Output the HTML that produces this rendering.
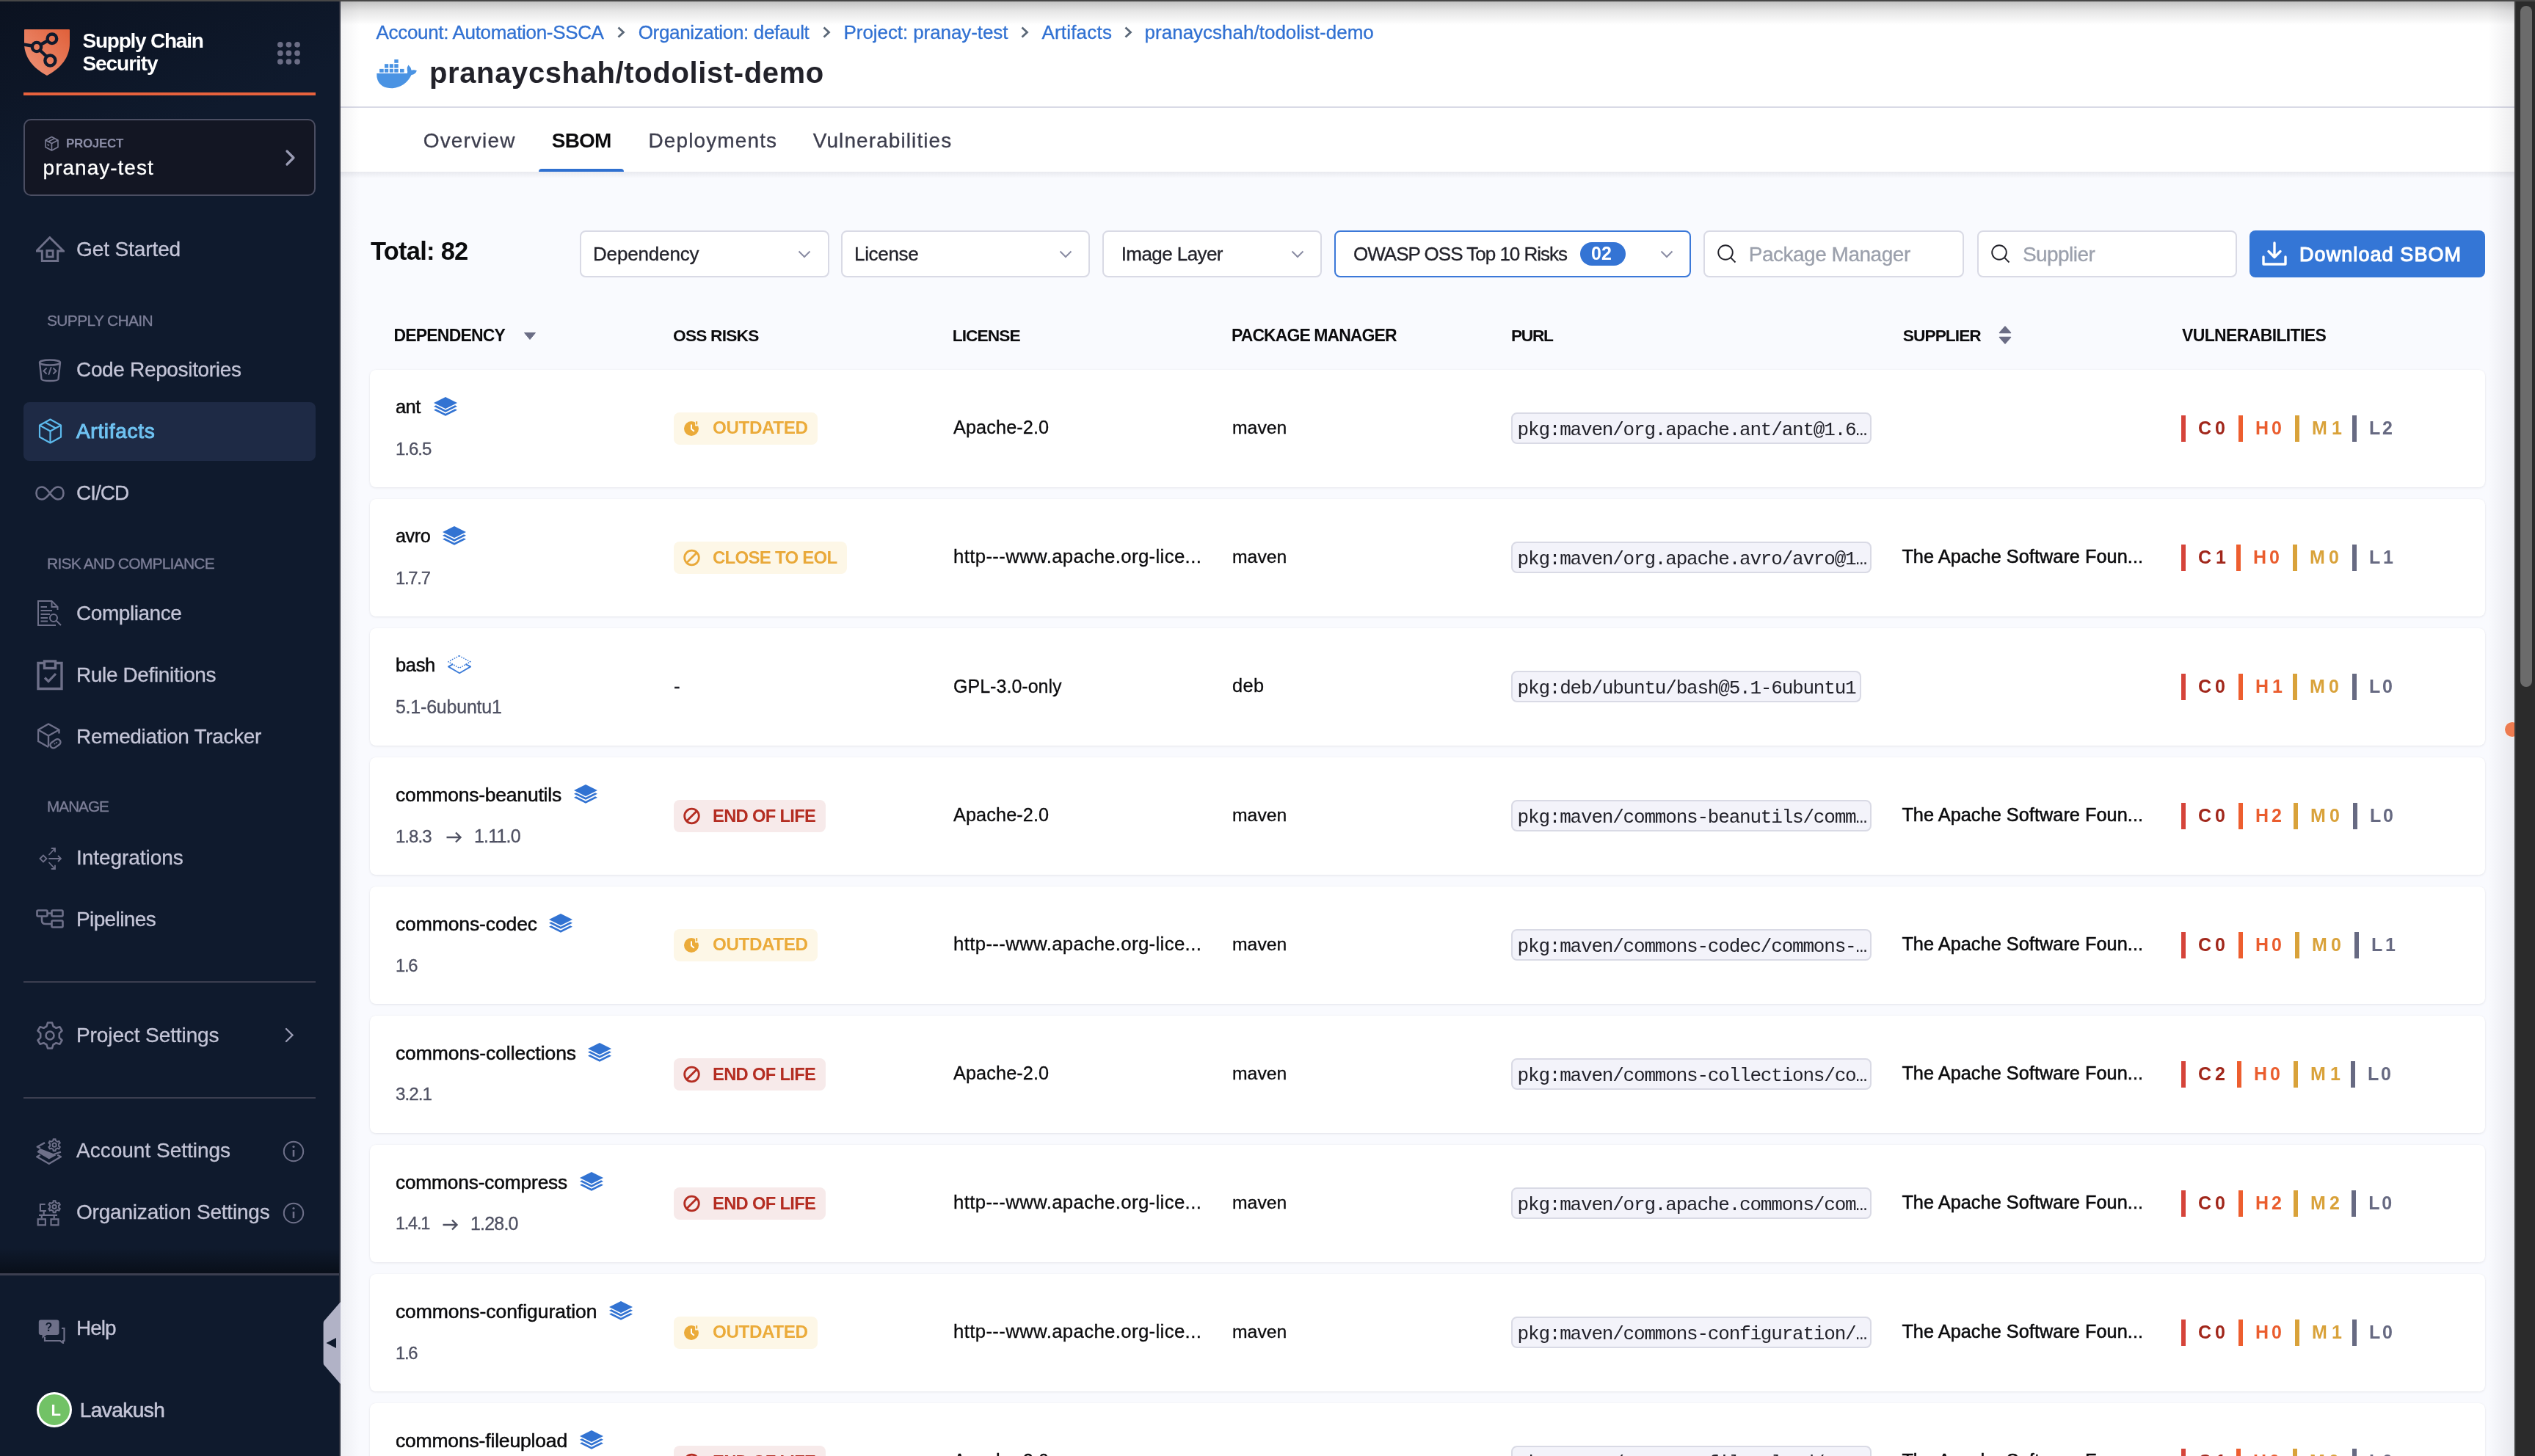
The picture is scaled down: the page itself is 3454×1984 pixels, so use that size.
<!DOCTYPE html><html><head><meta charset="utf-8"><title>SBOM</title><style>
*{box-sizing:border-box;margin:0;padding:0}
html,body{width:3454px;height:1984px;overflow:hidden;background:#f9fafe;font-family:"Liberation Sans",sans-serif}
.t{position:absolute;white-space:nowrap;-webkit-font-smoothing:antialiased}
body{will-change:transform}
@media (max-width:1800px){html{zoom:0.5}}
</style></head><body>
<div style="position:absolute;left:0px;top:0px;width:462px;height:1984px;background:linear-gradient(160deg,#0b1220 0%,#0f1a2d 12%,#0f1a2d 100%)"></div>
<div style="position:absolute;left:462px;top:0px;width:2px;height:1984px;background:#2c303e"></div>
<svg style="position:absolute;left:33px;top:40px;" width="62" height="63" viewBox="0 0 62 63" fill="none"><defs><linearGradient id="lg" x1="0" y1="1" x2="1" y2="0"><stop offset="0" stop-color="#ee9479"/><stop offset="1" stop-color="#e0603a"/></linearGradient></defs>
<path d="M1 0 H61 Q62 0 62 1 V19 C62 38 50 53 31 63 C12 53 0 38 0 19 V1 Q0 0 1 0Z" fill="url(#lg)"/>
<g stroke="#0f1a2d" stroke-width="4.4" fill="none"><path d="M-2 20.5 L11 22.5"/><path d="M22 21 L32 15.5"/><path d="M21.5 28.5 L30 36.5"/>
<circle cx="37.9" cy="12.8" r="6.3"/><circle cx="17" cy="24" r="6.1"/><circle cx="35.4" cy="42.5" r="7"/></g></svg>
<div class="t" style="left:112.50px;top:41.50px;font-size:28px;line-height:28px;color:#ffffff;font-weight:700;letter-spacing:-1.23px;">Supply Chain</div>
<div class="t" style="left:112.50px;top:72.50px;font-size:28px;line-height:28px;color:#ffffff;font-weight:700;letter-spacing:-1.07px;">Security</div>
<svg style="position:absolute;left:378px;top:57px;" width="31" height="31" viewBox="0 0 31 31" fill="none"><circle cx="3.85" cy="3.85" r="3.85" fill="#6b6d85"/><circle cx="15.45" cy="3.85" r="3.85" fill="#6b6d85"/><circle cx="27.05" cy="3.85" r="3.85" fill="#6b6d85"/><circle cx="3.85" cy="15.45" r="3.85" fill="#6b6d85"/><circle cx="15.45" cy="15.45" r="3.85" fill="#6b6d85"/><circle cx="27.05" cy="15.45" r="3.85" fill="#6b6d85"/><circle cx="3.85" cy="27.05" r="3.85" fill="#6b6d85"/><circle cx="15.45" cy="27.05" r="3.85" fill="#6b6d85"/><circle cx="27.05" cy="27.05" r="3.85" fill="#6b6d85"/></svg>
<div style="position:absolute;left:32px;top:126px;width:398px;height:4px;background:#e8623d"></div>
<div style="position:absolute;left:32px;top:162px;width:398px;height:105px;background:#131623;border:2px solid #4b4e62;border-radius:10px"></div>
<svg style="position:absolute;left:60px;top:185px;" width="21" height="21" viewBox="0 0 21 21" fill="none"><g stroke="#7b7d95" stroke-width="1.6" stroke-linejoin="round"><path d="M10.5 1.5 L19 6 V15.5 L10.5 20 L2 15.5 V6 Z"/><path d="M2 6 L10.5 10.5 L19 6 M10.5 10.5 V20"/><path d="M6 8 L14.5 3.5"/><path d="M4.5 12 L7 13.2"/></g></svg>
<div class="t" style="left:90.00px;top:187.00px;font-size:17px;line-height:17px;color:#8b8da6;font-weight:700;letter-spacing:-0.33px;">PROJECT</div>
<div class="t" style="left:58.60px;top:215.00px;font-size:28px;line-height:28px;color:#ffffff;letter-spacing:1.00px;-webkit-text-stroke:0.3px #ffffff;">pranay-test</div>
<svg style="position:absolute;left:386px;top:203px;" width="20" height="24" viewBox="0 0 20 24" fill="none"><path d="M5 3 L14 12 L5 21" stroke="#9a9cb4" stroke-width="3.2" fill="none" stroke-linecap="round" stroke-linejoin="round"/></svg>
<div class="t" style="left:104.00px;top:326.00px;font-size:28px;line-height:28px;color:#c4c5d7;letter-spacing:-0.10px;-webkit-text-stroke:0.3px #c4c5d7;">Get Started</div>
<svg style="position:absolute;left:49px;top:322px;" width="39" height="36" viewBox="0 0 39 36" fill="none"><path d="M0.7 20 L18.8 1.6 L37.4 20 H29.7 V33.5 H8.3 V20 Z" stroke="#6e7089" stroke-width="2.9" stroke-linejoin="miter" fill="none"/><rect x="14.9" y="19.5" width="8.2" height="8.5" stroke="#6e7089" stroke-width="2.9"/></svg>
<div class="t" style="left:64.00px;top:425.50px;font-size:21.0px;line-height:21.0px;color:#7d7f98;letter-spacing:-0.68px;-webkit-text-stroke:0.3px #7d7f98;">SUPPLY CHAIN</div>
<div class="t" style="left:104.00px;top:489.50px;font-size:28px;line-height:28px;color:#c4c5d7;letter-spacing:-0.34px;-webkit-text-stroke:0.3px #c4c5d7;">Code Repositories</div>
<svg style="position:absolute;left:52px;top:489px;" width="32" height="32" viewBox="0 0 32 32" fill="none"><ellipse cx="16" cy="5" rx="14" ry="3.5" stroke="#6e7089" stroke-width="2.4"/><path d="M2 5 L4.5 27.5 Q5 30 16 30 Q27 30 27.5 27.5 L30 5" stroke="#6e7089" stroke-width="2.4" fill="none"/><path d="M11 13 L7.5 16.5 L11 20 M21 13 L24.5 16.5 L21 20 M17.5 12 L14.5 21" stroke="#6e7089" stroke-width="2" fill="none" stroke-linecap="round"/></svg>
<div style="position:absolute;left:32px;top:548px;width:398px;height:80px;background:#1e2a45;border-radius:8px"></div>
<div class="t" style="left:104.00px;top:573.50px;font-size:28px;line-height:28px;color:#6fc3f2;letter-spacing:0.69px;-webkit-text-stroke:1.0px #6fc3f2;">Artifacts</div>
<svg style="position:absolute;left:52px;top:570px;" width="33" height="35" viewBox="0 0 33 35" fill="none"><g stroke="#5cb9ec" stroke-width="2.2" stroke-linejoin="round" fill="none"><path d="M16.5 1.5 L31 9.5 V25.5 L16.5 33.5 L2 25.5 V9.5 Z"/><path d="M2 9.5 L16.5 17.5 L31 9.5 M16.5 17.5 V33.5"/><path d="M9.5 5.5 L24 13.5"/></g></svg>
<div class="t" style="left:104.00px;top:657.50px;font-size:28px;line-height:28px;color:#c4c5d7;letter-spacing:-1.00px;-webkit-text-stroke:0.3px #c4c5d7;">CI/CD</div>
<svg style="position:absolute;left:48px;top:662px;" width="40" height="20" viewBox="0 0 40 20" fill="none"><path d="M20 10 C15 3 12 1.5 9 1.5 C4.5 1.5 1.5 5 1.5 10 C1.5 15 4.5 18.5 9 18.5 C12 18.5 15 17 20 10 C25 3 28 1.5 31 1.5 C35.5 1.5 38.5 5 38.5 10 C38.5 15 35.5 18.5 31 18.5 C28 18.5 25 17 20 10Z" stroke="#6e7089" stroke-width="2.6" fill="none"/></svg>
<div class="t" style="left:64.00px;top:757.00px;font-size:21.0px;line-height:21.0px;color:#7d7f98;letter-spacing:-0.78px;-webkit-text-stroke:0.3px #7d7f98;">RISK AND COMPLIANCE</div>
<div class="t" style="left:104.00px;top:821.50px;font-size:28px;line-height:28px;color:#c4c5d7;letter-spacing:-0.44px;-webkit-text-stroke:0.3px #c4c5d7;">Compliance</div>
<svg style="position:absolute;left:51px;top:818px;" width="34" height="36" viewBox="0 0 34 36" fill="none"><g stroke="#6e7089" stroke-width="2" fill="none"><path d="M27.5 13 V9 L19.5 1 H1 V34 H25"/><path d="M19.5 1 V9 H27.5"/><path d="M4.5 9 H13 M4.5 14 H20 M4.5 19 H17 M4.5 24 H14 M4.5 28.5 H14"/><circle cx="22" cy="24" r="5"/><path d="M25.5 27.5 L32 34"/></g></svg>
<div class="t" style="left:104.00px;top:905.50px;font-size:28px;line-height:28px;color:#c4c5d7;letter-spacing:-0.37px;-webkit-text-stroke:0.3px #c4c5d7;">Rule Definitions</div>
<svg style="position:absolute;left:50px;top:899px;" width="36" height="42" viewBox="0 0 36 42" fill="none"><g stroke="#6e7089" stroke-width="3.4" fill="none"><path d="M9 4.5 H2 V39.5 H34 V4.5 H27"/><rect x="10.5" y="2" width="15" height="9.5"/><path d="M11 24.5 L16 29.5 L26 19" stroke-width="3.2"/></g></svg>
<div class="t" style="left:104.00px;top:989.50px;font-size:28px;line-height:28px;color:#c4c5d7;letter-spacing:-0.33px;-webkit-text-stroke:0.3px #c4c5d7;">Remediation Tracker</div>
<svg style="position:absolute;left:51px;top:985px;" width="34" height="38" viewBox="0 0 34 38" fill="none"><g stroke="#6e7089" stroke-width="2.4" fill="none" stroke-linejoin="round"><path d="M29.5 14.5 V9.5 L15 1.5 L1 9.5 V25 L15 33"/><path d="M1 9.5 L15 17.5 L29.5 9.5 M15 17.5 V32"/><rect x="17" y="24" width="15" height="8.5" rx="4.2" transform="rotate(-35 24.5 28.25)"/></g><circle cx="23.5" cy="28.5" r="1" fill="#6e7089"/><circle cx="26" cy="27" r="1" fill="#6e7089"/></svg>
<div class="t" style="left:64.00px;top:1089.12px;font-size:20.75px;line-height:20.75px;color:#7d7f98;letter-spacing:-1.00px;-webkit-text-stroke:0.3px #7d7f98;">MANAGE</div>
<div class="t" style="left:104.00px;top:1154.50px;font-size:28px;line-height:28px;color:#c4c5d7;letter-spacing:-0.05px;-webkit-text-stroke:0.3px #c4c5d7;">Integrations</div>
<svg style="position:absolute;left:53px;top:1154px;" width="32" height="32" viewBox="0 0 32 32" fill="none"><g stroke="#6e7089" stroke-width="1.8" fill="none" stroke-linecap="round"><path d="M1.5 16 L6 11.5 L10.5 16 L6 20.5 Z"/><path d="M14 16 H30 M26.5 12.5 L30 16 L26.5 19.5"/><path d="M14 10.5 L22 2 M17.5 2 H22 V6.5"/><path d="M14 21.5 L22 30 M22 25.5 V30 H17.5"/></g></svg>
<div class="t" style="left:104.00px;top:1238.50px;font-size:28px;line-height:28px;color:#c4c5d7;letter-spacing:-0.62px;-webkit-text-stroke:0.3px #c4c5d7;">Pipelines</div>
<svg style="position:absolute;left:49px;top:1239px;" width="38" height="26" viewBox="0 0 38 26" fill="none"><g stroke="#6e7089" stroke-width="2.6" fill="none"><rect x="1.5" y="1.5" width="14" height="8" rx="1.5"/><rect x="21.5" y="1.5" width="15" height="8" rx="1.5"/><rect x="21.5" y="15.5" width="15" height="9" rx="1.5"/><path d="M15.5 5.5 H21.5 M8 9.5 V15 Q8 20 13 20 H21.5"/></g></svg>
<div style="position:absolute;left:32px;top:1337px;width:398px;height:2px;background:#3b3e50"></div>
<div class="t" style="left:104.00px;top:1396.50px;font-size:28px;line-height:28px;color:#c4c5d7;letter-spacing:-0.10px;-webkit-text-stroke:0.3px #c4c5d7;">Project Settings</div>
<svg style="position:absolute;left:50px;top:1392px;" width="36" height="38" viewBox="0 0 36 38" fill="none"><path d="M15 1.5 H21 L22.5 6.5 L26.5 8.8 L31.5 7.3 L34.5 12.5 L30.8 16.2 V21.8 L34.5 25.5 L31.5 30.7 L26.5 29.2 L22.5 31.5 L21 36.5 H15 L13.5 31.5 L9.5 29.2 L4.5 30.7 L1.5 25.5 L5.2 21.8 V16.2 L1.5 12.5 L4.5 7.3 L9.5 8.8 L13.5 6.5 Z" stroke="#6e7089" stroke-width="2.6" stroke-linejoin="round" fill="none"/><circle cx="18" cy="19" r="5.5" stroke="#6e7089" stroke-width="2.6" fill="none"/></svg>
<svg style="position:absolute;left:386px;top:1399px;" width="16" height="24" viewBox="0 0 16 24" fill="none"><path d="M4 3 L12.5 11.5 L4 20" stroke="#9a9cb4" stroke-width="2.4" fill="none" stroke-linecap="round"/></svg>
<div style="position:absolute;left:32px;top:1495px;width:398px;height:2px;background:#3b3e50"></div>
<div class="t" style="left:104.00px;top:1553.50px;font-size:28px;line-height:28px;color:#c4c5d7;-webkit-text-stroke:0.3px #c4c5d7;">Account Settings</div>
<svg style="position:absolute;left:49px;top:1550px;" width="35" height="38" viewBox="0 0 35 38" fill="none"><path d="M23.55 4.20 L23.60 2.14 L26.60 2.14 L26.65 4.20 L29.52 5.85 L31.33 4.87 L32.83 7.47 L31.08 8.55 L31.08 11.85 L32.83 12.93 L31.33 15.53 L29.52 14.55 L26.65 16.20 L26.60 18.26 L23.60 18.26 L23.55 16.20 L20.68 14.55 L18.87 15.53 L17.37 12.93 L19.12 11.85 L19.12 8.55 L17.37 7.47 L18.87 4.87 L20.68 5.85 Z" stroke="#6e7089" stroke-width="2" stroke-linejoin="round" fill="none"/><circle cx="25.1" cy="10.2" r="2.6" stroke="#6e7089" stroke-width="2" fill="none"/><path d="M12 7.1 L1.7 12.7 L5.8 14.7" stroke="#6e7089" stroke-width="2.4" fill="none" stroke-linejoin="round"/><path d="M1.3 19.7 L5.8 14.9 L24.8 22.6 L27.3 24.2 L17.8 29.6 Z" fill="#6e7089"/><path d="M24 23.2 L33.9 19.7 M5.8 23.8 L1.3 26.3 L17.8 35.7 L33.9 26.3 L29.3 23.8" stroke="#6e7089" stroke-width="2.4" fill="none" stroke-linejoin="round"/></svg>
<svg style="position:absolute;left:385px;top:1554px;" width="30" height="30" viewBox="0 0 30 30" fill="none"><circle cx="15" cy="15" r="13.2" stroke="#6e7089" stroke-width="2" fill="none"/><path d="M15 13 V22" stroke="#6e7089" stroke-width="2.6"/><circle cx="15" cy="8.5" r="1.6" fill="#6e7089"/></svg>
<div class="t" style="left:104.00px;top:1637.50px;font-size:28px;line-height:28px;color:#c4c5d7;letter-spacing:-0.20px;-webkit-text-stroke:0.3px #c4c5d7;">Organization Settings</div>
<svg style="position:absolute;left:49px;top:1634px;" width="35" height="38" viewBox="0 0 35 38" fill="none"><path d="M23.55 4.30 L23.60 2.24 L26.60 2.24 L26.65 4.30 L29.52 5.95 L31.33 4.97 L32.83 7.57 L31.08 8.65 L31.08 11.95 L32.83 13.03 L31.33 15.63 L29.52 14.65 L26.65 16.30 L26.60 18.36 L23.60 18.36 L23.55 16.30 L20.68 14.65 L18.87 15.63 L17.37 13.03 L19.12 11.95 L19.12 8.65 L17.37 7.57 L18.87 4.97 L20.68 5.95 Z" stroke="#6e7089" stroke-width="2" stroke-linejoin="round" fill="none"/><circle cx="25.1" cy="10.3" r="2.6" stroke="#6e7089" stroke-width="2" fill="none"/><g stroke="#6e7089" stroke-width="2.2" fill="none"><path d="M12.6 7 H5.9 V16 H14 M10.7 16 V21.9 M4 21.9 H29 M7.8 21.9 V26.2 M24.7 21.9 V26.2"/><rect x="2.7" y="27.3" width="10.2" height="8"/><rect x="20.5" y="27.3" width="10" height="8"/></g></svg>
<svg style="position:absolute;left:385px;top:1638px;" width="30" height="30" viewBox="0 0 30 30" fill="none"><circle cx="15" cy="15" r="13.2" stroke="#6e7089" stroke-width="2" fill="none"/><path d="M15 13 V22" stroke="#6e7089" stroke-width="2.6"/><circle cx="15" cy="8.5" r="1.6" fill="#6e7089"/></svg>
<div style="position:absolute;left:0px;top:1700px;width:462px;height:36px;background:linear-gradient(180deg,rgba(0,0,0,0) 0%,rgba(0,0,0,0.45) 100%)"></div>
<div style="position:absolute;left:0px;top:1735px;width:462px;height:3px;background:#3c3f50"></div>
<div class="t" style="left:104.00px;top:1795.50px;font-size:28px;line-height:28px;color:#c4c5d7;letter-spacing:-1.00px;-webkit-text-stroke:0.3px #c4c5d7;">Help</div>
<svg style="position:absolute;left:51px;top:1797px;" width="38" height="34" viewBox="0 0 38 34" fill="none"><path d="M4.5 1.5 H26.5 Q29.5 1.5 29.5 4.5 V19 Q29.5 22 26.5 22 H12.5 L6.5 27 V22 H4.5 Q1.8 22 1.8 19 V4.5 Q1.8 1.5 4.5 1.5Z" fill="#6e7089"/><path d="M33 13 H36.5 V30 H35 V33 L31 30 H10 V25" stroke="#6e7089" stroke-width="2.2" fill="none"/><text x="15.3" y="17" font-family="Liberation Sans" font-weight="700" font-size="16" fill="#0f1a2d" text-anchor="middle">?</text></svg>
<svg style="position:absolute;left:438px;top:1774px;" width="26" height="112" viewBox="0 0 26 112" fill="none"><path d="M26 0 L26 112 L3.5 86 Q2.6 85 2.6 82 V30 Q2.6 27 3.5 26 Z" fill="#b1b2c6"/><path d="M6.5 56 L20 49 V63Z" fill="#0f1a2d"/></svg>
<div style="position:absolute;left:50px;top:1897px;width:48px;height:48px;border-radius:50%;background:#72c266;border:3px solid #ffffff"></div>
<div class="t" style="left:69.50px;top:1910.50px;font-size:22px;line-height:22px;color:#ffffff;font-weight:700;">L</div>
<div class="t" style="left:108.80px;top:1907.50px;font-size:28px;line-height:28px;color:#c4c5d7;letter-spacing:-0.54px;-webkit-text-stroke:0.6px #c4c5d7;">Lavakush</div>
<div style="position:absolute;left:464px;top:0px;width:2962px;height:234px;background:#ffffff"></div>
<div style="position:absolute;left:464px;top:2px;width:2962px;height:32px;background:linear-gradient(180deg,rgba(0,0,0,0.24) 0%,rgba(0,0,0,0.1) 40%,rgba(0,0,0,0) 100%)"></div>
<div style="position:absolute;left:464px;top:145px;width:2962px;height:2px;background:#d9dae6"></div>
<div class="t" style="left:512.60px;top:31.00px;font-size:26px;line-height:26px;color:#3171d2;letter-spacing:-0.33px;-webkit-text-stroke:0.3px #3171d2;">Account: Automation-SSCA</div>
<svg style="position:absolute;left:839px;top:36px;" width="14" height="16" viewBox="0 0 14 16" fill="none"><path d="M3.5 1.5 L10.5 8 L3.5 14.5" stroke="#5b6878" stroke-width="2.8" fill="none"/></svg>
<div class="t" style="left:869.70px;top:31.00px;font-size:26px;line-height:26px;color:#3171d2;letter-spacing:-0.34px;-webkit-text-stroke:0.3px #3171d2;">Organization: default</div>
<svg style="position:absolute;left:1119px;top:36px;" width="14" height="16" viewBox="0 0 14 16" fill="none"><path d="M3.5 1.5 L10.5 8 L3.5 14.5" stroke="#5b6878" stroke-width="2.8" fill="none"/></svg>
<div class="t" style="left:1149.60px;top:31.00px;font-size:26px;line-height:26px;color:#3171d2;letter-spacing:-0.08px;-webkit-text-stroke:0.3px #3171d2;">Project: pranay-test</div>
<svg style="position:absolute;left:1389px;top:36px;" width="14" height="16" viewBox="0 0 14 16" fill="none"><path d="M3.5 1.5 L10.5 8 L3.5 14.5" stroke="#5b6878" stroke-width="2.8" fill="none"/></svg>
<div class="t" style="left:1419.40px;top:31.00px;font-size:26px;line-height:26px;color:#3171d2;letter-spacing:0.20px;-webkit-text-stroke:0.3px #3171d2;">Artifacts</div>
<svg style="position:absolute;left:1530px;top:36px;" width="14" height="16" viewBox="0 0 14 16" fill="none"><path d="M3.5 1.5 L10.5 8 L3.5 14.5" stroke="#5b6878" stroke-width="2.8" fill="none"/></svg>
<div class="t" style="left:1559.60px;top:31.00px;font-size:26px;line-height:26px;color:#3171d2;-webkit-text-stroke:0.3px #3171d2;">pranaycshah/todolist-demo</div>
<svg style="position:absolute;left:513px;top:80px;" width="56" height="41" viewBox="0 0 56 41" fill="none"><g fill="#4a93e3"><rect x="4.1" y="13.9" width="5.6" height="4.8"/><rect x="11" y="13.9" width="5.2" height="4.8"/><rect x="17.8" y="13.9" width="5.1" height="4.8"/><rect x="24.3" y="13.9" width="5.4" height="4.8"/><rect x="32" y="13.9" width="5.6" height="4.8"/><rect x="11" y="7.2" width="5.2" height="5.4"/><rect x="17.8" y="7.2" width="5.1" height="5.4"/><rect x="24.3" y="7.2" width="5.4" height="5.4"/><rect x="24.3" y="1" width="5.4" height="4.8"/><path d="M0.3 20.1 H41.8 Q42.6 18 41.8 15.5 Q41.2 11.5 43.4 8.5 Q47 11.5 47.6 15.8 Q51 14.6 54.9 16.2 Q53 21.5 47.6 22 Q40 38 22 40.2 Q6 40.5 1.5 29 Q0 25 0.3 20.1 Z"/></g></svg>
<div class="t" style="left:585.00px;top:79.00px;font-size:40px;line-height:40px;color:#22222a;font-weight:700;letter-spacing:0.62px;">pranaycshah/todolist-demo</div>
<div class="t" style="left:576.80px;top:177.80px;font-size:28px;line-height:28px;color:#3c3d4d;letter-spacing:1.13px;-webkit-text-stroke:0.3px #3c3d4d;">Overview</div>
<div class="t" style="left:751.80px;top:177.80px;font-size:28px;line-height:28px;color:#0b0b0d;font-weight:700;letter-spacing:-0.80px;">SBOM</div>
<div class="t" style="left:883.40px;top:177.80px;font-size:28px;line-height:28px;color:#3c3d4d;letter-spacing:1.13px;-webkit-text-stroke:0.3px #3c3d4d;">Deployments</div>
<div class="t" style="left:1107.70px;top:177.80px;font-size:28px;line-height:28px;color:#3c3d4d;letter-spacing:1.09px;-webkit-text-stroke:0.3px #3c3d4d;">Vulnerabilities</div>
<div style="position:absolute;left:734px;top:230px;width:116px;height:4px;background:#2f70d0;border-radius:4px 4px 0 0"></div>
<div style="position:absolute;left:464px;top:234px;width:2962px;height:9px;background:linear-gradient(180deg,rgba(40,41,61,0.08),rgba(40,41,61,0))"></div>
<div class="t" style="left:505.00px;top:324.75px;font-size:34.5px;line-height:34.5px;color:#0b0b0d;font-weight:700;letter-spacing:-0.75px;">Total: 82</div>
<div style="position:absolute;left:790px;top:314px;width:340px;height:64px;background:#fff;border:2px solid #d9dae5;border-radius:8px"></div>
<div class="t" style="left:808.00px;top:333.00px;font-size:26px;line-height:26px;color:#22222a;letter-spacing:-0.16px;-webkit-text-stroke:0.3px #22222a;">Dependency</div>
<svg style="position:absolute;left:1086px;top:336px;" width="20" height="20" viewBox="0 0 20 20" fill="none"><path d="M2.5 6.5 L10 14 L17.5 6.5" stroke="#8a8ca3" stroke-width="2" fill="none"/></svg>
<div style="position:absolute;left:1146px;top:314px;width:339px;height:64px;background:#fff;border:2px solid #d9dae5;border-radius:8px"></div>
<div class="t" style="left:1164.00px;top:333.00px;font-size:26px;line-height:26px;color:#22222a;letter-spacing:-0.33px;-webkit-text-stroke:0.3px #22222a;">License</div>
<svg style="position:absolute;left:1442px;top:336px;" width="20" height="20" viewBox="0 0 20 20" fill="none"><path d="M2.5 6.5 L10 14 L17.5 6.5" stroke="#8a8ca3" stroke-width="2" fill="none"/></svg>
<div style="position:absolute;left:1502px;top:314px;width:299px;height:64px;background:#fff;border:2px solid #d9dae5;border-radius:8px"></div>
<div class="t" style="left:1527.70px;top:333.00px;font-size:26px;line-height:26px;color:#22222a;letter-spacing:-0.57px;-webkit-text-stroke:0.3px #22222a;">Image Layer</div>
<svg style="position:absolute;left:1758px;top:336px;" width="20" height="20" viewBox="0 0 20 20" fill="none"><path d="M2.5 6.5 L10 14 L17.5 6.5" stroke="#8a8ca3" stroke-width="2" fill="none"/></svg>
<div style="position:absolute;left:1818px;top:314px;width:486px;height:64px;background:#fff;border:2px solid #3b78d8;border-radius:8px"></div>
<div class="t" style="left:1844.00px;top:333.00px;font-size:26px;line-height:26px;color:#22222a;letter-spacing:-1.00px;-webkit-text-stroke:0.3px #22222a;">OWASP OSS Top 10 Risks</div>
<div style="position:absolute;left:2153px;top:330px;width:62px;height:32px;background:#3474d4;border-radius:16px"></div>
<div class="t" style="left:2168.00px;top:332.50px;font-size:25px;line-height:25px;color:#ffffff;font-weight:700;">02</div>
<svg style="position:absolute;left:2261px;top:336px;" width="20" height="20" viewBox="0 0 20 20" fill="none"><path d="M2.5 6.5 L10 14 L17.5 6.5" stroke="#8a8ca3" stroke-width="2" fill="none"/></svg>
<div style="position:absolute;left:2321px;top:314px;width:355px;height:64px;background:#fff;border:2px solid #d9dae5;border-radius:8px"></div>
<svg style="position:absolute;left:2339px;top:332px;" width="28" height="28" viewBox="0 0 28 28" fill="none"><circle cx="12" cy="12" r="9.8" stroke="#22222a" stroke-width="1.9" fill="none"/><path d="M19.2 19.2 L25.5 25.5" stroke="#22222a" stroke-width="1.9"/></svg>
<div class="t" style="left:2382.70px;top:332.50px;font-size:28px;line-height:28px;color:#9ba0ac;letter-spacing:-0.48px;-webkit-text-stroke:0.3px #9ba0ac;">Package Manager</div>
<div style="position:absolute;left:2694px;top:314px;width:354px;height:64px;background:#fff;border:2px solid #d9dae5;border-radius:8px"></div>
<svg style="position:absolute;left:2712px;top:332px;" width="28" height="28" viewBox="0 0 28 28" fill="none"><circle cx="12" cy="12" r="9.8" stroke="#22222a" stroke-width="1.9" fill="none"/><path d="M19.2 19.2 L25.5 25.5" stroke="#22222a" stroke-width="1.9"/></svg>
<div class="t" style="left:2756.00px;top:332.50px;font-size:28px;line-height:28px;color:#9ba0ac;letter-spacing:-0.57px;-webkit-text-stroke:0.3px #9ba0ac;">Supplier</div>
<div style="position:absolute;left:3065px;top:314px;width:321px;height:64px;background:#3476d6;border-radius:8px"></div>
<svg style="position:absolute;left:3081px;top:328px;" width="36" height="36" viewBox="0 0 36 36" fill="none"><g stroke="#fff" stroke-width="3.4" fill="none" stroke-linecap="round" stroke-linejoin="round"><path d="M18 3 V22 M10 14.5 L18 22.5 L26 14.5"/><path d="M3 22 V32 H33 V22"/></g></svg>
<div class="t" style="left:3133.00px;top:333.50px;font-size:27px;line-height:27px;color:#ffffff;letter-spacing:1.08px;-webkit-text-stroke:1.1px #ffffff;">Download SBOM</div>
<div class="t" style="left:536.60px;top:445.50px;font-size:23.0px;line-height:23.0px;color:#0b0b0d;font-weight:700;letter-spacing:-0.84px;">DEPENDENCY</div>
<svg style="position:absolute;left:712px;top:450px;" width="20" height="15" viewBox="0 0 20 15" fill="none"><path d="M2.5 3.5 H17.5 L10 12.5Z" fill="#6b6d85" stroke="#6b6d85" stroke-width="1" stroke-linejoin="round"/></svg>
<div class="t" style="left:917.00px;top:445.62px;font-size:22.75px;line-height:22.75px;color:#0b0b0d;font-weight:700;letter-spacing:-0.81px;">OSS RISKS</div>
<div class="t" style="left:1297.70px;top:445.62px;font-size:22.75px;line-height:22.75px;color:#0b0b0d;font-weight:700;letter-spacing:-0.95px;">LICENSE</div>
<div class="t" style="left:1678.00px;top:445.50px;font-size:23.0px;line-height:23.0px;color:#0b0b0d;font-weight:700;letter-spacing:-0.93px;">PACKAGE MANAGER</div>
<div class="t" style="left:2059.00px;top:445.62px;font-size:22.75px;line-height:22.75px;color:#0b0b0d;font-weight:700;letter-spacing:-1.33px;">PURL</div>
<div class="t" style="left:2592.80px;top:445.62px;font-size:22.75px;line-height:22.75px;color:#0b0b0d;font-weight:700;letter-spacing:-0.97px;">SUPPLIER</div>
<svg style="position:absolute;left:2722px;top:443px;" width="20" height="27" viewBox="0 0 20 27" fill="none"><path d="M2.5 10.5 L10 2 L17.5 10.5Z M2.5 16.5 L10 25 L17.5 16.5Z" fill="#6b6d85" stroke="#6b6d85" stroke-width="1.5" stroke-linejoin="round"/></svg>
<div class="t" style="left:2973.00px;top:445.50px;font-size:23.0px;line-height:23.0px;color:#0b0b0d;font-weight:700;letter-spacing:-0.64px;">VULNERABILITIES</div>
<div style="position:absolute;left:504px;top:504px;width:2882px;height:160px;background:#fff;border-radius:8px;box-shadow:0 0 1px rgba(40,41,61,0.08),0 1px 3px rgba(96,97,112,0.12)"></div>
<div class="t" style="left:538.90px;top:542.25px;font-size:25.5px;line-height:25.5px;color:#0b0b0d;letter-spacing:-0.45px;-webkit-text-stroke:0.5px #0b0b0d;">ant</div>
<svg style="position:absolute;left:591px;top:541px;" width="32" height="27" viewBox="0 0 32 27" fill="none"><g fill="#3273d2"><path d="M16 0 L32 8 L16 16 L0 8Z"/><path d="M3 11.2 L16 17.7 L29 11.2 L32 12.8 L16 20.8 L0 12.8Z"/><path d="M3 16.2 L16 22.7 L29 16.2 L32 17.8 L16 25.8 L0 17.8Z"/></g></svg>
<div class="t" style="left:538.90px;top:599.50px;font-size:24.0px;line-height:24.0px;color:#4f5162;letter-spacing:-0.97px;-webkit-text-stroke:0.3px #4f5162;">1.6.5</div>
<div style="position:absolute;left:918px;top:562px;width:196px;height:44px;background:#fdf7e7;border-radius:8px"></div>
<svg style="position:absolute;left:931px;top:573px;" width="22" height="22" viewBox="0 0 22 22" fill="none"><defs><clipPath id="nc562"><path d="M0 0 H16.1 V7.6 H22 V22 H0Z"/></clipPath></defs><circle cx="11" cy="11" r="10" fill="#ebab3a" clip-path="url(#nc562)"/><rect x="17.2" y="1.2" width="2" height="4.3" fill="#ebab3a"/><path d="M11 5.5 V11.6 L14.8 14.8" stroke="#fff" stroke-width="2" fill="none"/></svg>
<div class="t" style="left:971.00px;top:571.38px;font-size:24.25px;line-height:24.25px;color:#ebab3a;font-weight:700;letter-spacing:-0.43px;">OUTDATED</div>
<div class="t" style="left:1299.00px;top:570.38px;font-size:25.25px;line-height:25.25px;color:#0b0b0d;letter-spacing:0.11px;-webkit-text-stroke:0.3px #0b0b0d;">Apache-2.0</div>
<div class="t" style="left:1679.00px;top:571.12px;font-size:24.75px;line-height:24.75px;color:#0b0b0d;-webkit-text-stroke:0.3px #0b0b0d;">maven</div>
<div style="position:absolute;left:2059px;top:562px;width:491px;height:43px;background:#f3f3fa;border:2px solid #d9dae5;border-radius:8px"></div>
<div class="t" style="left:2067.60px;top:573.00px;font-size:26px;line-height:26px;color:#22222a;font-family:'Liberation Mono',monospace;letter-spacing:-1.20px;">pkg:maven/org.apache.ant/ant@1.6…</div>
<div style="position:absolute;left:2972px;top:566px;width:6px;height:36px;background:#d5443a"></div>
<div class="t" style="left:2995.00px;top:570.50px;font-size:25px;line-height:25px;color:#a1271b;font-weight:700;">C</div>
<div class="t" style="left:3018.00px;top:570.50px;font-size:25px;line-height:25px;color:#a1271b;font-weight:700;">0</div>
<div style="position:absolute;left:3050px;top:566px;width:6px;height:36px;background:#ed5e2f"></div>
<div class="t" style="left:3073.00px;top:570.50px;font-size:25px;line-height:25px;color:#ea5d2e;font-weight:700;">H</div>
<div class="t" style="left:3095.00px;top:570.50px;font-size:25px;line-height:25px;color:#ea5d2e;font-weight:700;">0</div>
<div style="position:absolute;left:3127px;top:566px;width:6px;height:36px;background:#d9a23a"></div>
<div class="t" style="left:3150.00px;top:570.50px;font-size:25px;line-height:25px;color:#d9a23a;font-weight:700;">M</div>
<div class="t" style="left:3177.00px;top:570.50px;font-size:25px;line-height:25px;color:#d9a23a;font-weight:700;">1</div>
<div style="position:absolute;left:3205px;top:566px;width:6px;height:36px;background:#676a82"></div>
<div class="t" style="left:3228.00px;top:570.50px;font-size:25px;line-height:25px;color:#676a82;font-weight:700;">L</div>
<div class="t" style="left:3246.00px;top:570.50px;font-size:25px;line-height:25px;color:#676a82;font-weight:700;">2</div>
<div style="position:absolute;left:504px;top:680px;width:2882px;height:160px;background:#fff;border-radius:8px;box-shadow:0 0 1px rgba(40,41,61,0.08),0 1px 3px rgba(96,97,112,0.12)"></div>
<div class="t" style="left:538.90px;top:718.38px;font-size:25.25px;line-height:25.25px;color:#0b0b0d;letter-spacing:-0.37px;-webkit-text-stroke:0.5px #0b0b0d;">avro</div>
<svg style="position:absolute;left:603px;top:717px;" width="32" height="27" viewBox="0 0 32 27" fill="none"><g fill="#3273d2"><path d="M16 0 L32 8 L16 16 L0 8Z"/><path d="M3 11.2 L16 17.7 L29 11.2 L32 12.8 L16 20.8 L0 12.8Z"/><path d="M3 16.2 L16 22.7 L29 16.2 L32 17.8 L16 25.8 L0 17.8Z"/></g></svg>
<div class="t" style="left:538.90px;top:775.62px;font-size:23.75px;line-height:23.75px;color:#4f5162;letter-spacing:-1.20px;-webkit-text-stroke:0.3px #4f5162;">1.7.7</div>
<div style="position:absolute;left:918px;top:738px;width:236px;height:44px;background:#fdf7e7;border-radius:8px"></div>
<svg style="position:absolute;left:931px;top:748px;" width="23" height="24" viewBox="0 0 23 24" fill="none"><circle cx="11.5" cy="12" r="9.8" stroke="#e9a93a" stroke-width="2.8" fill="none"/><path d="M5 18.5 L18 5.5" stroke="#e9a93a" stroke-width="2.8"/></svg>
<div class="t" style="left:971.00px;top:747.50px;font-size:24.0px;line-height:24.0px;color:#e9a93a;font-weight:700;letter-spacing:-0.73px;">CLOSE TO EOL</div>
<div class="t" style="left:1299.00px;top:746.12px;font-size:25.75px;line-height:25.75px;color:#0b0b0d;letter-spacing:0.36px;-webkit-text-stroke:0.3px #0b0b0d;">http---www.apache.org-lice...</div>
<div class="t" style="left:1679.00px;top:747.12px;font-size:24.75px;line-height:24.75px;color:#0b0b0d;-webkit-text-stroke:0.3px #0b0b0d;">maven</div>
<div style="position:absolute;left:2059px;top:738px;width:491px;height:43px;background:#f3f3fa;border:2px solid #d9dae5;border-radius:8px"></div>
<div class="t" style="left:2067.60px;top:749.00px;font-size:26px;line-height:26px;color:#22222a;font-family:'Liberation Mono',monospace;letter-spacing:-1.20px;">pkg:maven/org.apache.avro/avro@1…</div>
<div class="t" style="left:2591.40px;top:746.38px;font-size:25.25px;line-height:25.25px;color:#0b0b0d;letter-spacing:0.06px;-webkit-text-stroke:0.55px #0b0b0d;">The Apache Software Foun...</div>
<div style="position:absolute;left:2972px;top:742px;width:6px;height:36px;background:#d5443a"></div>
<div class="t" style="left:2995.00px;top:746.50px;font-size:25px;line-height:25px;color:#a1271b;font-weight:700;">C</div>
<div class="t" style="left:3019.00px;top:746.50px;font-size:25px;line-height:25px;color:#a1271b;font-weight:700;">1</div>
<div style="position:absolute;left:3047px;top:742px;width:6px;height:36px;background:#ed5e2f"></div>
<div class="t" style="left:3070.00px;top:746.50px;font-size:25px;line-height:25px;color:#ea5d2e;font-weight:700;">H</div>
<div class="t" style="left:3092.00px;top:746.50px;font-size:25px;line-height:25px;color:#ea5d2e;font-weight:700;">0</div>
<div style="position:absolute;left:3124px;top:742px;width:6px;height:36px;background:#d9a23a"></div>
<div class="t" style="left:3147.00px;top:746.50px;font-size:25px;line-height:25px;color:#d9a23a;font-weight:700;">M</div>
<div class="t" style="left:3173.00px;top:746.50px;font-size:25px;line-height:25px;color:#d9a23a;font-weight:700;">0</div>
<div style="position:absolute;left:3205px;top:742px;width:6px;height:36px;background:#676a82"></div>
<div class="t" style="left:3228.00px;top:746.50px;font-size:25px;line-height:25px;color:#676a82;font-weight:700;">L</div>
<div class="t" style="left:3247.00px;top:746.50px;font-size:25px;line-height:25px;color:#676a82;font-weight:700;">1</div>
<div style="position:absolute;left:504px;top:856px;width:2882px;height:160px;background:#fff;border-radius:8px;box-shadow:0 0 1px rgba(40,41,61,0.08),0 1px 3px rgba(96,97,112,0.12)"></div>
<div class="t" style="left:538.90px;top:894.25px;font-size:25.5px;line-height:25.5px;color:#0b0b0d;letter-spacing:-0.30px;-webkit-text-stroke:0.5px #0b0b0d;">bash</div>
<svg style="position:absolute;left:610px;top:893px;" width="32" height="27" viewBox="0 0 32 27" fill="none"><path d="M15.6 0.6 L30.8 8.8 L16 17.3 L0.8 8.8Z" stroke="#3b7bd8" stroke-width="1.5" fill="none" stroke-dasharray="1.6 1.6"/><path d="M7.1 12.1 L0.9 15.4 L16.1 24.3 L31.2 15.4 L24.4 12.1" stroke="#3b7bd8" stroke-width="1.8" fill="none" stroke-linejoin="round"/></svg>
<div class="t" style="left:538.90px;top:950.50px;font-size:25.0px;line-height:25.0px;color:#4f5162;letter-spacing:-0.21px;-webkit-text-stroke:0.3px #4f5162;">5.1-6ubuntu1</div>
<div class="t" style="left:918.00px;top:922.00px;font-size:26px;line-height:26px;color:#22222a;-webkit-text-stroke:0.3px #22222a;">-</div>
<div class="t" style="left:1299.00px;top:922.50px;font-size:25.0px;line-height:25.0px;color:#0b0b0d;letter-spacing:0.03px;-webkit-text-stroke:0.3px #0b0b0d;">GPL-3.0-only</div>
<div class="t" style="left:1679.00px;top:922.38px;font-size:25.25px;line-height:25.25px;color:#0b0b0d;letter-spacing:0.40px;-webkit-text-stroke:0.3px #0b0b0d;">deb</div>
<div style="position:absolute;left:2059px;top:914px;width:477px;height:43px;background:#f3f3fa;border:2px solid #d9dae5;border-radius:8px"></div>
<div class="t" style="left:2067.60px;top:925.00px;font-size:26px;line-height:26px;color:#22222a;font-family:'Liberation Mono',monospace;letter-spacing:-1.20px;">pkg:deb/ubuntu/bash@5.1-6ubuntu1</div>
<div style="position:absolute;left:2972px;top:918px;width:6px;height:36px;background:#d5443a"></div>
<div class="t" style="left:2995.00px;top:922.50px;font-size:25px;line-height:25px;color:#a1271b;font-weight:700;">C</div>
<div class="t" style="left:3018.00px;top:922.50px;font-size:25px;line-height:25px;color:#a1271b;font-weight:700;">0</div>
<div style="position:absolute;left:3050px;top:918px;width:6px;height:36px;background:#ed5e2f"></div>
<div class="t" style="left:3073.00px;top:922.50px;font-size:25px;line-height:25px;color:#ea5d2e;font-weight:700;">H</div>
<div class="t" style="left:3096.00px;top:922.50px;font-size:25px;line-height:25px;color:#ea5d2e;font-weight:700;">1</div>
<div style="position:absolute;left:3124px;top:918px;width:6px;height:36px;background:#d9a23a"></div>
<div class="t" style="left:3147.00px;top:922.50px;font-size:25px;line-height:25px;color:#d9a23a;font-weight:700;">M</div>
<div class="t" style="left:3173.00px;top:922.50px;font-size:25px;line-height:25px;color:#d9a23a;font-weight:700;">0</div>
<div style="position:absolute;left:3205px;top:918px;width:6px;height:36px;background:#676a82"></div>
<div class="t" style="left:3228.00px;top:922.50px;font-size:25px;line-height:25px;color:#676a82;font-weight:700;">L</div>
<div class="t" style="left:3246.00px;top:922.50px;font-size:25px;line-height:25px;color:#676a82;font-weight:700;">0</div>
<div style="position:absolute;left:504px;top:1032px;width:2882px;height:160px;background:#fff;border-radius:8px;box-shadow:0 0 1px rgba(40,41,61,0.08),0 1px 3px rgba(96,97,112,0.12)"></div>
<div class="t" style="left:538.90px;top:1069.75px;font-size:26.5px;line-height:26.5px;color:#0b0b0d;letter-spacing:-0.22px;-webkit-text-stroke:0.5px #0b0b0d;">commons-beanutils</div>
<svg style="position:absolute;left:782px;top:1069px;" width="32" height="27" viewBox="0 0 32 27" fill="none"><g fill="#3273d2"><path d="M16 0 L32 8 L16 16 L0 8Z"/><path d="M3 11.2 L16 17.7 L29 11.2 L32 12.8 L16 20.8 L0 12.8Z"/><path d="M3 16.2 L16 22.7 L29 16.2 L32 17.8 L16 25.8 L0 17.8Z"/></g></svg>
<div class="t" style="left:538.90px;top:1127.50px;font-size:24.0px;line-height:24.0px;color:#4f5162;letter-spacing:-0.90px;-webkit-text-stroke:0.3px #4f5162;">1.8.3</div>
<svg style="position:absolute;left:607px;top:1133px;" width="23" height="16" viewBox="0 0 22 16" fill="none"><path d="M1 8 H20 M13.5 1.5 L20 8 L13.5 14.5" stroke="#4f5162" stroke-width="2.4" fill="none"/></svg>
<div class="t" style="left:646.00px;top:1126.50px;font-size:25px;line-height:25px;color:#4f5162;letter-spacing:-0.80px;-webkit-text-stroke:0.3px #4f5162;">1.11.0</div>
<div style="position:absolute;left:918px;top:1090px;width:207px;height:44px;background:#f7eaea;border-radius:8px"></div>
<svg style="position:absolute;left:931px;top:1100px;" width="23" height="24" viewBox="0 0 23 24" fill="none"><circle cx="11.5" cy="12" r="9.8" stroke="#b42d22" stroke-width="2.8" fill="none"/><path d="M5 18.5 L18 5.5" stroke="#b42d22" stroke-width="2.8"/></svg>
<div class="t" style="left:971.00px;top:1099.62px;font-size:23.75px;line-height:23.75px;color:#b42d22;font-weight:700;letter-spacing:-0.70px;">END OF LIFE</div>
<div class="t" style="left:1299.00px;top:1098.38px;font-size:25.25px;line-height:25.25px;color:#0b0b0d;letter-spacing:0.11px;-webkit-text-stroke:0.3px #0b0b0d;">Apache-2.0</div>
<div class="t" style="left:1679.00px;top:1099.12px;font-size:24.75px;line-height:24.75px;color:#0b0b0d;-webkit-text-stroke:0.3px #0b0b0d;">maven</div>
<div style="position:absolute;left:2059px;top:1090px;width:491px;height:43px;background:#f3f3fa;border:2px solid #d9dae5;border-radius:8px"></div>
<div class="t" style="left:2067.60px;top:1101.00px;font-size:26px;line-height:26px;color:#22222a;font-family:'Liberation Mono',monospace;letter-spacing:-1.20px;">pkg:maven/commons-beanutils/comm…</div>
<div class="t" style="left:2591.40px;top:1098.38px;font-size:25.25px;line-height:25.25px;color:#0b0b0d;letter-spacing:0.06px;-webkit-text-stroke:0.55px #0b0b0d;">The Apache Software Foun...</div>
<div style="position:absolute;left:2972px;top:1094px;width:6px;height:36px;background:#d5443a"></div>
<div class="t" style="left:2995.00px;top:1098.50px;font-size:25px;line-height:25px;color:#a1271b;font-weight:700;">C</div>
<div class="t" style="left:3018.00px;top:1098.50px;font-size:25px;line-height:25px;color:#a1271b;font-weight:700;">0</div>
<div style="position:absolute;left:3050px;top:1094px;width:6px;height:36px;background:#ed5e2f"></div>
<div class="t" style="left:3073.00px;top:1098.50px;font-size:25px;line-height:25px;color:#ea5d2e;font-weight:700;">H</div>
<div class="t" style="left:3095.00px;top:1098.50px;font-size:25px;line-height:25px;color:#ea5d2e;font-weight:700;">2</div>
<div style="position:absolute;left:3125px;top:1094px;width:6px;height:36px;background:#d9a23a"></div>
<div class="t" style="left:3148.10px;top:1098.50px;font-size:25px;line-height:25px;color:#d9a23a;font-weight:700;">M</div>
<div class="t" style="left:3174.10px;top:1098.50px;font-size:25px;line-height:25px;color:#d9a23a;font-weight:700;">0</div>
<div style="position:absolute;left:3206px;top:1094px;width:6px;height:36px;background:#676a82"></div>
<div class="t" style="left:3229.10px;top:1098.50px;font-size:25px;line-height:25px;color:#676a82;font-weight:700;">L</div>
<div class="t" style="left:3247.10px;top:1098.50px;font-size:25px;line-height:25px;color:#676a82;font-weight:700;">0</div>
<div style="position:absolute;left:504px;top:1208px;width:2882px;height:160px;background:#fff;border-radius:8px;box-shadow:0 0 1px rgba(40,41,61,0.08),0 1px 3px rgba(96,97,112,0.12)"></div>
<div class="t" style="left:538.90px;top:1245.75px;font-size:26.5px;line-height:26.5px;color:#0b0b0d;letter-spacing:-0.10px;-webkit-text-stroke:0.5px #0b0b0d;">commons-codec</div>
<svg style="position:absolute;left:748px;top:1245px;" width="32" height="27" viewBox="0 0 32 27" fill="none"><g fill="#3273d2"><path d="M16 0 L32 8 L16 16 L0 8Z"/><path d="M3 11.2 L16 17.7 L29 11.2 L32 12.8 L16 20.8 L0 12.8Z"/><path d="M3 16.2 L16 22.7 L29 16.2 L32 17.8 L16 25.8 L0 17.8Z"/></g></svg>
<div class="t" style="left:538.90px;top:1303.62px;font-size:23.75px;line-height:23.75px;color:#4f5162;letter-spacing:-1.20px;-webkit-text-stroke:0.3px #4f5162;">1.6</div>
<div style="position:absolute;left:918px;top:1266px;width:196px;height:44px;background:#fdf7e7;border-radius:8px"></div>
<svg style="position:absolute;left:931px;top:1277px;" width="22" height="22" viewBox="0 0 22 22" fill="none"><defs><clipPath id="nc1266"><path d="M0 0 H16.1 V7.6 H22 V22 H0Z"/></clipPath></defs><circle cx="11" cy="11" r="10" fill="#ebab3a" clip-path="url(#nc1266)"/><rect x="17.2" y="1.2" width="2" height="4.3" fill="#ebab3a"/><path d="M11 5.5 V11.6 L14.8 14.8" stroke="#fff" stroke-width="2" fill="none"/></svg>
<div class="t" style="left:971.00px;top:1275.38px;font-size:24.25px;line-height:24.25px;color:#ebab3a;font-weight:700;letter-spacing:-0.43px;">OUTDATED</div>
<div class="t" style="left:1299.00px;top:1274.12px;font-size:25.75px;line-height:25.75px;color:#0b0b0d;letter-spacing:0.36px;-webkit-text-stroke:0.3px #0b0b0d;">http---www.apache.org-lice...</div>
<div class="t" style="left:1679.00px;top:1275.12px;font-size:24.75px;line-height:24.75px;color:#0b0b0d;-webkit-text-stroke:0.3px #0b0b0d;">maven</div>
<div style="position:absolute;left:2059px;top:1266px;width:491px;height:43px;background:#f3f3fa;border:2px solid #d9dae5;border-radius:8px"></div>
<div class="t" style="left:2067.60px;top:1277.00px;font-size:26px;line-height:26px;color:#22222a;font-family:'Liberation Mono',monospace;letter-spacing:-1.20px;">pkg:maven/commons-codec/commons-…</div>
<div class="t" style="left:2591.40px;top:1274.38px;font-size:25.25px;line-height:25.25px;color:#0b0b0d;letter-spacing:0.06px;-webkit-text-stroke:0.55px #0b0b0d;">The Apache Software Foun...</div>
<div style="position:absolute;left:2972px;top:1270px;width:6px;height:36px;background:#d5443a"></div>
<div class="t" style="left:2995.00px;top:1274.50px;font-size:25px;line-height:25px;color:#a1271b;font-weight:700;">C</div>
<div class="t" style="left:3018.00px;top:1274.50px;font-size:25px;line-height:25px;color:#a1271b;font-weight:700;">0</div>
<div style="position:absolute;left:3050px;top:1270px;width:6px;height:36px;background:#ed5e2f"></div>
<div class="t" style="left:3073.00px;top:1274.50px;font-size:25px;line-height:25px;color:#ea5d2e;font-weight:700;">H</div>
<div class="t" style="left:3095.00px;top:1274.50px;font-size:25px;line-height:25px;color:#ea5d2e;font-weight:700;">0</div>
<div style="position:absolute;left:3127px;top:1270px;width:6px;height:36px;background:#d9a23a"></div>
<div class="t" style="left:3150.00px;top:1274.50px;font-size:25px;line-height:25px;color:#d9a23a;font-weight:700;">M</div>
<div class="t" style="left:3176.00px;top:1274.50px;font-size:25px;line-height:25px;color:#d9a23a;font-weight:700;">0</div>
<div style="position:absolute;left:3208px;top:1270px;width:6px;height:36px;background:#676a82"></div>
<div class="t" style="left:3231.00px;top:1274.50px;font-size:25px;line-height:25px;color:#676a82;font-weight:700;">L</div>
<div class="t" style="left:3250.00px;top:1274.50px;font-size:25px;line-height:25px;color:#676a82;font-weight:700;">1</div>
<div style="position:absolute;left:504px;top:1384px;width:2882px;height:160px;background:#fff;border-radius:8px;box-shadow:0 0 1px rgba(40,41,61,0.08),0 1px 3px rgba(96,97,112,0.12)"></div>
<div class="t" style="left:538.90px;top:1421.75px;font-size:26.5px;line-height:26.5px;color:#0b0b0d;letter-spacing:-0.07px;-webkit-text-stroke:0.5px #0b0b0d;">commons-collections</div>
<svg style="position:absolute;left:801px;top:1421px;" width="32" height="27" viewBox="0 0 32 27" fill="none"><g fill="#3273d2"><path d="M16 0 L32 8 L16 16 L0 8Z"/><path d="M3 11.2 L16 17.7 L29 11.2 L32 12.8 L16 20.8 L0 12.8Z"/><path d="M3 16.2 L16 22.7 L29 16.2 L32 17.8 L16 25.8 L0 17.8Z"/></g></svg>
<div class="t" style="left:538.90px;top:1479.38px;font-size:24.25px;line-height:24.25px;color:#4f5162;letter-spacing:-0.97px;-webkit-text-stroke:0.3px #4f5162;">3.2.1</div>
<div style="position:absolute;left:918px;top:1442px;width:207px;height:44px;background:#f7eaea;border-radius:8px"></div>
<svg style="position:absolute;left:931px;top:1452px;" width="23" height="24" viewBox="0 0 23 24" fill="none"><circle cx="11.5" cy="12" r="9.8" stroke="#b42d22" stroke-width="2.8" fill="none"/><path d="M5 18.5 L18 5.5" stroke="#b42d22" stroke-width="2.8"/></svg>
<div class="t" style="left:971.00px;top:1451.62px;font-size:23.75px;line-height:23.75px;color:#b42d22;font-weight:700;letter-spacing:-0.70px;">END OF LIFE</div>
<div class="t" style="left:1299.00px;top:1450.38px;font-size:25.25px;line-height:25.25px;color:#0b0b0d;letter-spacing:0.11px;-webkit-text-stroke:0.3px #0b0b0d;">Apache-2.0</div>
<div class="t" style="left:1679.00px;top:1451.12px;font-size:24.75px;line-height:24.75px;color:#0b0b0d;-webkit-text-stroke:0.3px #0b0b0d;">maven</div>
<div style="position:absolute;left:2059px;top:1442px;width:491px;height:43px;background:#f3f3fa;border:2px solid #d9dae5;border-radius:8px"></div>
<div class="t" style="left:2067.60px;top:1453.00px;font-size:26px;line-height:26px;color:#22222a;font-family:'Liberation Mono',monospace;letter-spacing:-1.20px;">pkg:maven/commons-collections/co…</div>
<div class="t" style="left:2591.40px;top:1450.38px;font-size:25.25px;line-height:25.25px;color:#0b0b0d;letter-spacing:0.06px;-webkit-text-stroke:0.55px #0b0b0d;">The Apache Software Foun...</div>
<div style="position:absolute;left:2972px;top:1446px;width:6px;height:36px;background:#d5443a"></div>
<div class="t" style="left:2995.00px;top:1450.50px;font-size:25px;line-height:25px;color:#a1271b;font-weight:700;">C</div>
<div class="t" style="left:3018.00px;top:1450.50px;font-size:25px;line-height:25px;color:#a1271b;font-weight:700;">2</div>
<div style="position:absolute;left:3048px;top:1446px;width:6px;height:36px;background:#ed5e2f"></div>
<div class="t" style="left:3071.10px;top:1450.50px;font-size:25px;line-height:25px;color:#ea5d2e;font-weight:700;">H</div>
<div class="t" style="left:3093.10px;top:1450.50px;font-size:25px;line-height:25px;color:#ea5d2e;font-weight:700;">0</div>
<div style="position:absolute;left:3125px;top:1446px;width:6px;height:36px;background:#d9a23a"></div>
<div class="t" style="left:3148.10px;top:1450.50px;font-size:25px;line-height:25px;color:#d9a23a;font-weight:700;">M</div>
<div class="t" style="left:3175.10px;top:1450.50px;font-size:25px;line-height:25px;color:#d9a23a;font-weight:700;">1</div>
<div style="position:absolute;left:3203px;top:1446px;width:6px;height:36px;background:#676a82"></div>
<div class="t" style="left:3226.10px;top:1450.50px;font-size:25px;line-height:25px;color:#676a82;font-weight:700;">L</div>
<div class="t" style="left:3244.10px;top:1450.50px;font-size:25px;line-height:25px;color:#676a82;font-weight:700;">0</div>
<div style="position:absolute;left:504px;top:1560px;width:2882px;height:160px;background:#fff;border-radius:8px;box-shadow:0 0 1px rgba(40,41,61,0.08),0 1px 3px rgba(96,97,112,0.12)"></div>
<div class="t" style="left:538.90px;top:1597.88px;font-size:26.25px;line-height:26.25px;color:#0b0b0d;letter-spacing:-0.13px;-webkit-text-stroke:0.5px #0b0b0d;">commons-compress</div>
<svg style="position:absolute;left:790px;top:1597px;" width="32" height="27" viewBox="0 0 32 27" fill="none"><g fill="#3273d2"><path d="M16 0 L32 8 L16 16 L0 8Z"/><path d="M3 11.2 L16 17.7 L29 11.2 L32 12.8 L16 20.8 L0 12.8Z"/><path d="M3 16.2 L16 22.7 L29 16.2 L32 17.8 L16 25.8 L0 17.8Z"/></g></svg>
<div class="t" style="left:538.90px;top:1656.25px;font-size:23.5px;line-height:23.5px;color:#4f5162;letter-spacing:-1.20px;-webkit-text-stroke:0.3px #4f5162;">1.4.1</div>
<svg style="position:absolute;left:602px;top:1661px;" width="23" height="16" viewBox="0 0 22 16" fill="none"><path d="M1 8 H20 M13.5 1.5 L20 8 L13.5 14.5" stroke="#4f5162" stroke-width="2.4" fill="none"/></svg>
<div class="t" style="left:641.00px;top:1654.50px;font-size:25px;line-height:25px;color:#4f5162;letter-spacing:-0.80px;-webkit-text-stroke:0.3px #4f5162;">1.28.0</div>
<div style="position:absolute;left:918px;top:1618px;width:207px;height:44px;background:#f7eaea;border-radius:8px"></div>
<svg style="position:absolute;left:931px;top:1628px;" width="23" height="24" viewBox="0 0 23 24" fill="none"><circle cx="11.5" cy="12" r="9.8" stroke="#b42d22" stroke-width="2.8" fill="none"/><path d="M5 18.5 L18 5.5" stroke="#b42d22" stroke-width="2.8"/></svg>
<div class="t" style="left:971.00px;top:1627.62px;font-size:23.75px;line-height:23.75px;color:#b42d22;font-weight:700;letter-spacing:-0.70px;">END OF LIFE</div>
<div class="t" style="left:1299.00px;top:1626.12px;font-size:25.75px;line-height:25.75px;color:#0b0b0d;letter-spacing:0.36px;-webkit-text-stroke:0.3px #0b0b0d;">http---www.apache.org-lice...</div>
<div class="t" style="left:1679.00px;top:1627.12px;font-size:24.75px;line-height:24.75px;color:#0b0b0d;-webkit-text-stroke:0.3px #0b0b0d;">maven</div>
<div style="position:absolute;left:2059px;top:1618px;width:491px;height:43px;background:#f3f3fa;border:2px solid #d9dae5;border-radius:8px"></div>
<div class="t" style="left:2067.60px;top:1629.00px;font-size:26px;line-height:26px;color:#22222a;font-family:'Liberation Mono',monospace;letter-spacing:-1.20px;">pkg:maven/org.apache.commons/com…</div>
<div class="t" style="left:2591.40px;top:1626.38px;font-size:25.25px;line-height:25.25px;color:#0b0b0d;letter-spacing:0.06px;-webkit-text-stroke:0.55px #0b0b0d;">The Apache Software Foun...</div>
<div style="position:absolute;left:2972px;top:1622px;width:6px;height:36px;background:#d5443a"></div>
<div class="t" style="left:2995.00px;top:1626.50px;font-size:25px;line-height:25px;color:#a1271b;font-weight:700;">C</div>
<div class="t" style="left:3018.00px;top:1626.50px;font-size:25px;line-height:25px;color:#a1271b;font-weight:700;">0</div>
<div style="position:absolute;left:3050px;top:1622px;width:6px;height:36px;background:#ed5e2f"></div>
<div class="t" style="left:3073.00px;top:1626.50px;font-size:25px;line-height:25px;color:#ea5d2e;font-weight:700;">H</div>
<div class="t" style="left:3095.00px;top:1626.50px;font-size:25px;line-height:25px;color:#ea5d2e;font-weight:700;">2</div>
<div style="position:absolute;left:3125px;top:1622px;width:6px;height:36px;background:#d9a23a"></div>
<div class="t" style="left:3148.10px;top:1626.50px;font-size:25px;line-height:25px;color:#d9a23a;font-weight:700;">M</div>
<div class="t" style="left:3174.10px;top:1626.50px;font-size:25px;line-height:25px;color:#d9a23a;font-weight:700;">2</div>
<div style="position:absolute;left:3204px;top:1622px;width:6px;height:36px;background:#676a82"></div>
<div class="t" style="left:3227.20px;top:1626.50px;font-size:25px;line-height:25px;color:#676a82;font-weight:700;">L</div>
<div class="t" style="left:3245.20px;top:1626.50px;font-size:25px;line-height:25px;color:#676a82;font-weight:700;">0</div>
<div style="position:absolute;left:504px;top:1736px;width:2882px;height:160px;background:#fff;border-radius:8px;box-shadow:0 0 1px rgba(40,41,61,0.08),0 1px 3px rgba(96,97,112,0.12)"></div>
<div class="t" style="left:538.90px;top:1773.75px;font-size:26.5px;line-height:26.5px;color:#0b0b0d;letter-spacing:-0.04px;-webkit-text-stroke:0.5px #0b0b0d;">commons-configuration</div>
<svg style="position:absolute;left:830px;top:1773px;" width="32" height="27" viewBox="0 0 32 27" fill="none"><g fill="#3273d2"><path d="M16 0 L32 8 L16 16 L0 8Z"/><path d="M3 11.2 L16 17.7 L29 11.2 L32 12.8 L16 20.8 L0 12.8Z"/><path d="M3 16.2 L16 22.7 L29 16.2 L32 17.8 L16 25.8 L0 17.8Z"/></g></svg>
<div class="t" style="left:538.90px;top:1831.62px;font-size:23.75px;line-height:23.75px;color:#4f5162;letter-spacing:-1.20px;-webkit-text-stroke:0.3px #4f5162;">1.6</div>
<div style="position:absolute;left:918px;top:1794px;width:196px;height:44px;background:#fdf7e7;border-radius:8px"></div>
<svg style="position:absolute;left:931px;top:1805px;" width="22" height="22" viewBox="0 0 22 22" fill="none"><defs><clipPath id="nc1794"><path d="M0 0 H16.1 V7.6 H22 V22 H0Z"/></clipPath></defs><circle cx="11" cy="11" r="10" fill="#ebab3a" clip-path="url(#nc1794)"/><rect x="17.2" y="1.2" width="2" height="4.3" fill="#ebab3a"/><path d="M11 5.5 V11.6 L14.8 14.8" stroke="#fff" stroke-width="2" fill="none"/></svg>
<div class="t" style="left:971.00px;top:1803.38px;font-size:24.25px;line-height:24.25px;color:#ebab3a;font-weight:700;letter-spacing:-0.43px;">OUTDATED</div>
<div class="t" style="left:1299.00px;top:1802.12px;font-size:25.75px;line-height:25.75px;color:#0b0b0d;letter-spacing:0.36px;-webkit-text-stroke:0.3px #0b0b0d;">http---www.apache.org-lice...</div>
<div class="t" style="left:1679.00px;top:1803.12px;font-size:24.75px;line-height:24.75px;color:#0b0b0d;-webkit-text-stroke:0.3px #0b0b0d;">maven</div>
<div style="position:absolute;left:2059px;top:1794px;width:491px;height:43px;background:#f3f3fa;border:2px solid #d9dae5;border-radius:8px"></div>
<div class="t" style="left:2067.60px;top:1805.00px;font-size:26px;line-height:26px;color:#22222a;font-family:'Liberation Mono',monospace;letter-spacing:-1.20px;">pkg:maven/commons-configuration/…</div>
<div class="t" style="left:2591.40px;top:1802.38px;font-size:25.25px;line-height:25.25px;color:#0b0b0d;letter-spacing:0.06px;-webkit-text-stroke:0.55px #0b0b0d;">The Apache Software Foun...</div>
<div style="position:absolute;left:2972px;top:1798px;width:6px;height:36px;background:#d5443a"></div>
<div class="t" style="left:2995.00px;top:1802.50px;font-size:25px;line-height:25px;color:#a1271b;font-weight:700;">C</div>
<div class="t" style="left:3018.00px;top:1802.50px;font-size:25px;line-height:25px;color:#a1271b;font-weight:700;">0</div>
<div style="position:absolute;left:3050px;top:1798px;width:6px;height:36px;background:#ed5e2f"></div>
<div class="t" style="left:3073.00px;top:1802.50px;font-size:25px;line-height:25px;color:#ea5d2e;font-weight:700;">H</div>
<div class="t" style="left:3095.00px;top:1802.50px;font-size:25px;line-height:25px;color:#ea5d2e;font-weight:700;">0</div>
<div style="position:absolute;left:3127px;top:1798px;width:6px;height:36px;background:#d9a23a"></div>
<div class="t" style="left:3150.00px;top:1802.50px;font-size:25px;line-height:25px;color:#d9a23a;font-weight:700;">M</div>
<div class="t" style="left:3177.00px;top:1802.50px;font-size:25px;line-height:25px;color:#d9a23a;font-weight:700;">1</div>
<div style="position:absolute;left:3205px;top:1798px;width:6px;height:36px;background:#676a82"></div>
<div class="t" style="left:3228.00px;top:1802.50px;font-size:25px;line-height:25px;color:#676a82;font-weight:700;">L</div>
<div class="t" style="left:3246.00px;top:1802.50px;font-size:25px;line-height:25px;color:#676a82;font-weight:700;">0</div>
<div style="position:absolute;left:504px;top:1912px;width:2882px;height:160px;background:#fff;border-radius:8px;box-shadow:0 0 1px rgba(40,41,61,0.08),0 1px 3px rgba(96,97,112,0.12)"></div>
<div class="t" style="left:538.90px;top:1949.75px;font-size:26.5px;line-height:26.5px;color:#0b0b0d;letter-spacing:-0.17px;-webkit-text-stroke:0.5px #0b0b0d;">commons-fileupload</div>
<svg style="position:absolute;left:790px;top:1949px;" width="32" height="27" viewBox="0 0 32 27" fill="none"><g fill="#3273d2"><path d="M16 0 L32 8 L16 16 L0 8Z"/><path d="M3 11.2 L16 17.7 L29 11.2 L32 12.8 L16 20.8 L0 12.8Z"/><path d="M3 16.2 L16 22.7 L29 16.2 L32 17.8 L16 25.8 L0 17.8Z"/></g></svg>
<div class="t" style="left:538.90px;top:2007.50px;font-size:24.0px;line-height:24.0px;color:#4f5162;letter-spacing:-0.97px;-webkit-text-stroke:0.3px #4f5162;">1.3.1</div>
<div style="position:absolute;left:918px;top:1970px;width:207px;height:44px;background:#f7eaea;border-radius:8px"></div>
<svg style="position:absolute;left:931px;top:1980px;" width="23" height="24" viewBox="0 0 23 24" fill="none"><circle cx="11.5" cy="12" r="9.8" stroke="#b42d22" stroke-width="2.8" fill="none"/><path d="M5 18.5 L18 5.5" stroke="#b42d22" stroke-width="2.8"/></svg>
<div class="t" style="left:971.00px;top:1979.62px;font-size:23.75px;line-height:23.75px;color:#b42d22;font-weight:700;letter-spacing:-0.70px;">END OF LIFE</div>
<div class="t" style="left:1299.00px;top:1978.38px;font-size:25.25px;line-height:25.25px;color:#0b0b0d;letter-spacing:0.11px;-webkit-text-stroke:0.3px #0b0b0d;">Apache-2.0</div>
<div class="t" style="left:1679.00px;top:1979.12px;font-size:24.75px;line-height:24.75px;color:#0b0b0d;-webkit-text-stroke:0.3px #0b0b0d;">maven</div>
<div style="position:absolute;left:2059px;top:1970px;width:491px;height:43px;background:#f3f3fa;border:2px solid #d9dae5;border-radius:8px"></div>
<div class="t" style="left:2067.60px;top:1981.00px;font-size:26px;line-height:26px;color:#22222a;font-family:'Liberation Mono',monospace;letter-spacing:-1.20px;">pkg:maven/commons-fileupload/co…</div>
<div class="t" style="left:2591.40px;top:1978.38px;font-size:25.25px;line-height:25.25px;color:#0b0b0d;letter-spacing:0.06px;-webkit-text-stroke:0.55px #0b0b0d;">The Apache Software Foun...</div>
<div style="position:absolute;left:2972px;top:1974px;width:6px;height:36px;background:#d5443a"></div>
<div class="t" style="left:2995.00px;top:1978.50px;font-size:25px;line-height:25px;color:#a1271b;font-weight:700;">C</div>
<div class="t" style="left:3019.00px;top:1978.50px;font-size:25px;line-height:25px;color:#a1271b;font-weight:700;">1</div>
<div style="position:absolute;left:3047px;top:1974px;width:6px;height:36px;background:#ed5e2f"></div>
<div class="t" style="left:3070.00px;top:1978.50px;font-size:25px;line-height:25px;color:#ea5d2e;font-weight:700;">H</div>
<div class="t" style="left:3092.00px;top:1978.50px;font-size:25px;line-height:25px;color:#ea5d2e;font-weight:700;">0</div>
<div style="position:absolute;left:3124px;top:1974px;width:6px;height:36px;background:#d9a23a"></div>
<div class="t" style="left:3147.00px;top:1978.50px;font-size:25px;line-height:25px;color:#d9a23a;font-weight:700;">M</div>
<div class="t" style="left:3173.00px;top:1978.50px;font-size:25px;line-height:25px;color:#d9a23a;font-weight:700;">0</div>
<div style="position:absolute;left:3205px;top:1974px;width:6px;height:36px;background:#676a82"></div>
<div class="t" style="left:3228.00px;top:1978.50px;font-size:25px;line-height:25px;color:#676a82;font-weight:700;">L</div>
<div class="t" style="left:3246.00px;top:1978.50px;font-size:25px;line-height:25px;color:#676a82;font-weight:700;">0</div>
<div style="position:absolute;left:464px;top:0px;width:26px;height:1984px;background:linear-gradient(90deg,rgba(30,30,50,0.05),rgba(30,30,50,0))"></div>
<div style="position:absolute;left:3390px;top:0px;width:36px;height:1984px;background:linear-gradient(90deg,rgba(30,30,50,0),rgba(30,30,50,0.08))"></div>
<div style="position:absolute;left:3412px;top:983px;width:22px;height:22px;border-radius:50%;background:#ed7b50;border:1px solid #f4fbfd"></div>
<div style="position:absolute;left:3426px;top:0;width:28px;height:1984px;background:#2b2b2b;border-left:2px solid #3a3a3a"></div>
<div style="position:absolute;left:3434px;top:8px;width:16px;height:928px;background:#6b6b6b;border-radius:8px"></div>
<div style="position:absolute;left:0;top:0;width:3454px;height:2px;background:#474747"></div>

</body></html>
